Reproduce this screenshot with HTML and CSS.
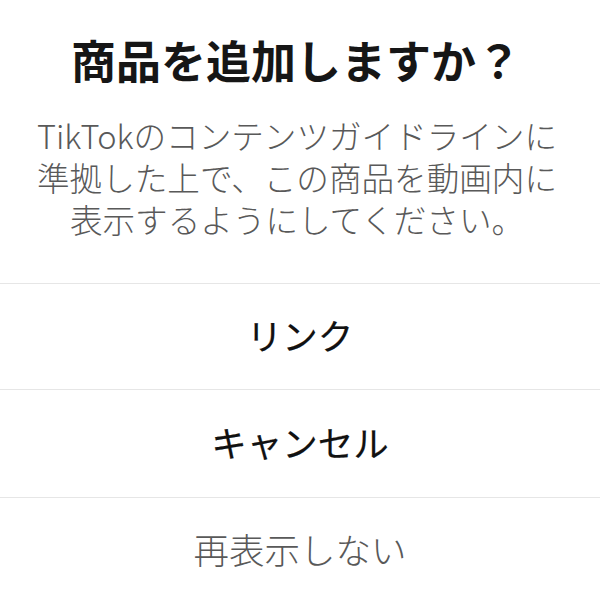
FILE: index.html
```html
<!DOCTYPE html>
<html lang="ja">
<head>
<meta charset="utf-8">
<link rel="stylesheet" href="styles.css">
</head>
<body>
<div class="dialog">
  <div class="header">
    <h1 class="title">商品を追加しますか？</h1>
    <p class="message"><span class="line">TikTokのコンテンツガイドラインに</span><span class="line">準拠した上で、この商品を動画内に</span><span class="line">表示するようにしてください。</span></p>
  </div>
  <div class="actions">
    <div class="action primary">リンク</div>
    <div class="action primary">キャンセル</div>
    <div class="action muted">再表示しない</div>
  </div>
</div>
</body>
</html>
```
FILE: styles.css
```css
html, body {
  margin: 0;
  padding: 0;
  background: #ffffff;
}
body {
  font-family: "Noto Sans CJK JP", "Noto Sans", sans-serif;
  width: 600px;
  height: 595px;
  overflow: hidden;
}
.dialog {
  display: flex;
  flex-direction: column;
}
.header {
  padding: 29px 20px 43px;
  text-align: center;
}
.title {
  margin: 0 8px 0 0;
  font-size: 45px;
  line-height: 62px;
  font-weight: 700;
  color: #161616;
}
.message {
  margin: 23px -7px 0 -13px;
  font-size: 32.6px;
  line-height: 42px;
  color: #595959;
  font-weight: 300;
  display: flex;
  flex-direction: column;
  align-items: center;
}
.line {
  display: block;
  height: 42px;
  white-space: nowrap;
}
.actions {
  display: flex;
  flex-direction: column;
}
.action {
  border-top: 1px solid #e6e6e6;
  height: 106px;
  box-sizing: border-box;
  padding-bottom: 4px;
  display: flex;
  align-items: center;
  justify-content: center;
  font-size: 35.5px;
}
.action:nth-child(2) {
  height: 108px;
}
.action.primary {
  color: #111111;
  font-weight: 400;
  -webkit-text-stroke: 0.2px #111111;
}
.action.muted {
  color: #595959;
  font-weight: 300;
}
```
